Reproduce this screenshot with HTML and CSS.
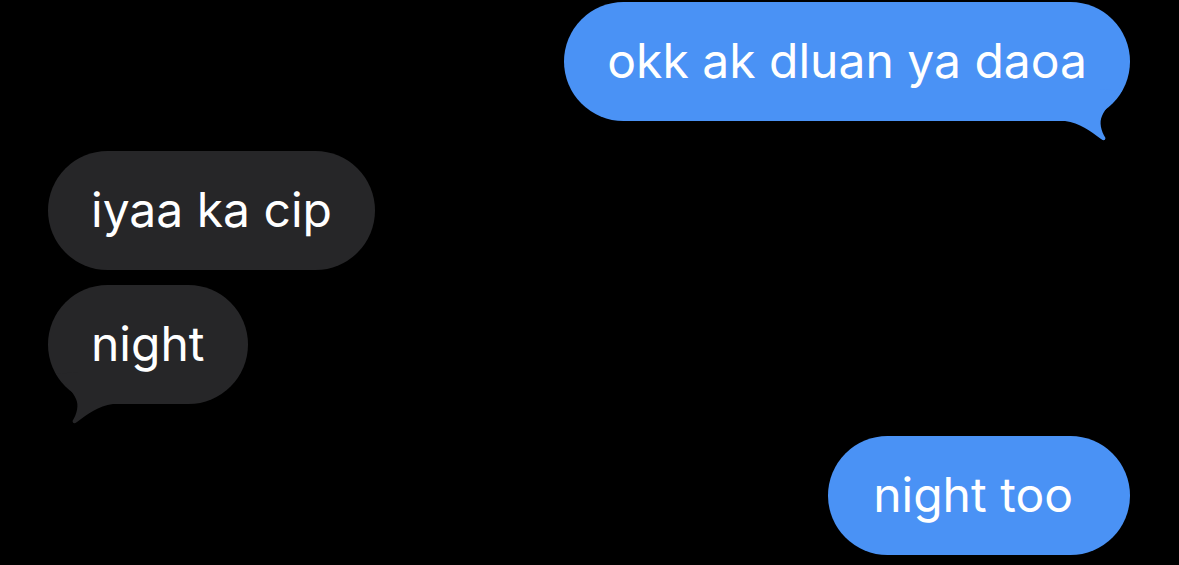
FILE: index.html
```html
<!DOCTYPE html>
<html lang="en">
<head>
    <meta charset="UTF-8">
    <meta name="viewport" content="width=device-width, initial-scale=1.0">
    <title>Messages</title>
    <link rel="stylesheet" href="styles.css">
</head>
<body>

    <div id="chat">
        <div class="msg sent first">
            okk ak dluan ya daoa
            <svg class="tail" width="65" height="55" viewBox="0 0 65 55">
                <path d="M5 32 C20 34 30 42 41 50 Q45 53 45.5 49 C41 42 39 33 42 27 C45 20 52 12 62 2 L40 0 L5 0 Z"/>
            </svg>
        </div>

        <div class="msg got">iyaa ka cip</div>
        <div class="msg got last">
            night
            <svg class="tail" width="65" height="55" viewBox="0 0 65 55">
                <path d="M5 32 C20 34 30 42 41 50 Q45 53 45.5 49 C41 42 39 33 42 27 C45 20 52 12 62 2 L40 0 L5 0 Z"/>
            </svg>
        </div>

        <div class="msg sent end">night too</div>
    </div>

</body>
</html>
```

FILE: styles.css
```css
        body {
            margin: 0;
            background: #000;
            font-family: Inter, "Noto Sans", sans-serif;
        }
        #chat {
            display: flex;
            flex-direction: column;
            padding: 2px 49px 0 48px;
        }
        .msg {
            position: relative;
            font-size: 48px;
            line-height: 58px;
            padding: 30px 43px 31px;
            border-radius: 60px;
            color: #fff;
            white-space: nowrap;
        }
        .sent {
            align-self: flex-end;
            background: #4a92f5;
            fill: #4a92f5;
        }
        .got {
            align-self: flex-start;
            background: #262628;
            fill: #262628;
        }
        .first { margin-bottom: 30px; }
        .got + .got { margin-top: 15px; }
        .end {
            margin-top: 32px;
            padding-left: 45px;
            padding-right: 57px;
        }

        /* little hook under the last bubble of a group */
        .tail {
            position: absolute;
            bottom: -23px;
        }
        .sent .tail { right: 5px; }
        .got .tail {
            left: 5px;
            transform: scaleX(-1);
        }
```
